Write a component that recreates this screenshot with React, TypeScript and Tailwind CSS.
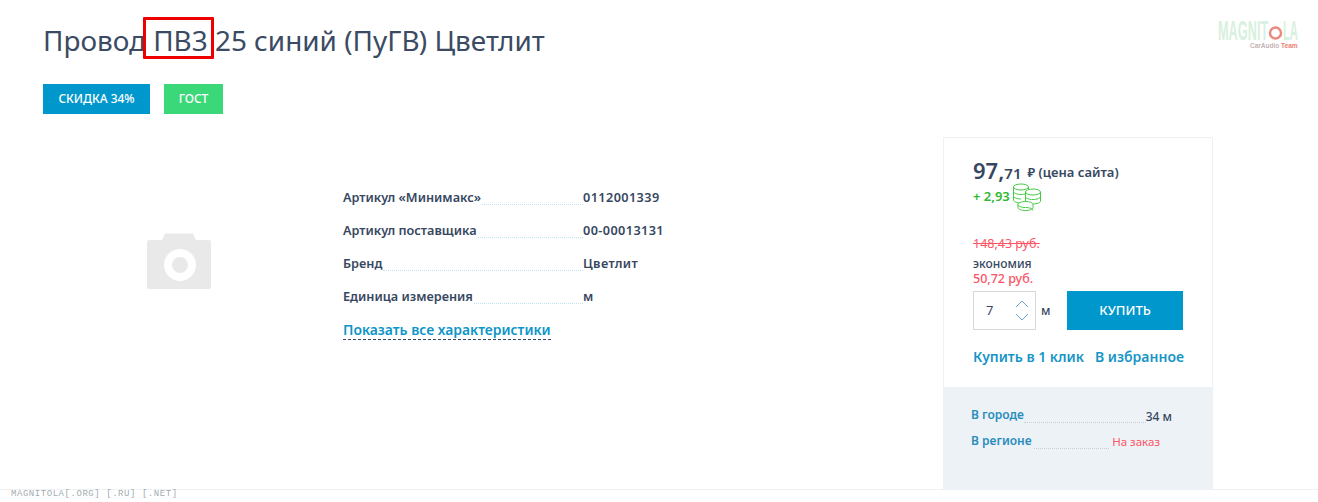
import React from 'react';

const specs = [
  { label: 'Артикул «Минимакс»', value: '0112001339' },
  { label: 'Артикул поставщика', value: '00-00013131' },
  { label: 'Бренд', value: 'Цветлит' },
  { label: 'Единица измерения', value: 'м' },
];

const CameraIcon = () => (
  <svg width="64" height="56" viewBox="0 0 64 56">
    <path
      fill="#e9e9e9"
      d="M2 7h13l3-6.500h28l3 6.500h13a2 2 0 0 1 2 2v45a2 2 0 0 1-2 2H2a2 2 0 0 1-2-2V9a2 2 0 0 1 2-2z"
    />
    <circle cx="33" cy="32" r="16" fill="#fff" />
    <circle cx="33" cy="32" r="8" fill="#e9e9e9" />
  </svg>
);

const CoinsIcon = () => (
  <svg width="29" height="28" viewBox="0 0 29 28" fill="#fff" stroke="#44cc44" strokeWidth="1">
    <ellipse cx="8" cy="4" rx="7.500" ry="3" />
    <path d="M0.500 4v13c0 1.700 3.400 3 7.500 3M0.500 8.500c0 1.700 3.400 3 7.500 3s7.500-1.300 7.500-3M0.500 13c0 1.700 3.400 3 7.500 3" fill="none" />
    <path d="M15.500 4v5" fill="none" />
    <ellipse cx="20" cy="9" rx="7.500" ry="3" />
    <path d="M12.500 9v9c0 1.700 3.400 3 7.500 3s7.500-1.300 7.500-3V9M12.500 13.500c0 1.700 3.400 3 7.500 3s7.500-1.300 7.500-3" fill="none" />
    <path d="M5 21.500c0-1.700 3.400-3 7.500-3s7.500 1.300 7.500 3v3c0 1.700-3.400 3-7.500 3s-7.500-1.300-7.500-3z" />
    <path d="M5 21.500c0 1.700 3.400 3 7.500 3s7.500 1.300 7.500 3" fill="none" />
  </svg>
);

export default function App() {
  return (
    <div className="relative h-[502px] w-[1318px] overflow-hidden bg-white font-['Noto_Sans',sans-serif] text-[#37475f]">
      {/* Title and badges */}
      <div className="pl-[43px] pt-[19px]">
        <h1 className="text-[27.900px] leading-[42px] text-[#3a4b63]">Провод ПВ3 25 синий (ПуГВ) Цветлит</h1>
        <div className="mt-[23px] flex gap-[14px]">
          <span className="flex h-[30px] w-[107px] items-center justify-center bg-[#0097cc] text-[12px] font-medium text-white">СКИДКА 34%</span>
          <span className="flex h-[30px] w-[59px] items-center justify-center bg-[#3bd87a] text-[12px] font-medium text-white">ГОСТ</span>
        </div>
      </div>

      {/* Main part */}
      <div className="mt-[23px] flex h-[352px] pl-[43px]">
        <div className="flex w-[272px] shrink-0 justify-center pt-[96px]">
          <CameraIcon />
        </div>
        <div className="ml-[28px] w-[600px] pt-[51px]">
          {specs.map((s) => (
            <div key={s.label} className="mb-[14px] flex h-[19px] items-center text-[12.700px] font-semibold leading-[19px]">
              <div className="flex w-[240px] items-end">
                <span className="whitespace-nowrap">{s.label}</span>
                <span className="mb-[2px] ml-[1px] flex-1 border-b border-dotted border-[#bfe3ee]" />
              </div>
              <span className="tracking-[0.400px]">{s.value}</span>
            </div>
          ))}
          <a className="block w-fit border-b border-dashed border-[#37475f] text-[13.900px] font-semibold leading-[19px] text-[#0c95c8]">
            Показать все характеристики
          </a>
        </div>

        {/* Price panel */}
        <div className="flex w-[270px] shrink-0 flex-col border border-[#eef2f6]">
          <div className="h-[249px] px-[29px] pt-[18px]">
            <div className="flex h-[27px] items-baseline leading-[28px]">
              <span className="text-[22px] font-semibold text-[#37475f]">97,</span>
              <span className="text-[15px] font-semibold">71</span>
              <span className="ml-[6px] -translate-y-[2px] text-[13px] font-semibold">₽ (цена сайта)</span>
            </div>
            <div className="flex h-[28px] items-center">
              <span className="text-[13px] font-semibold text-[#2fb82f]">+ 2,93</span>
              <span className="ml-[3px]"><CoinsIcon /></span>
            </div>
            <div className="mt-[24px] text-[12.500px] leading-[18px] text-[#fb5566] line-through">148,43 руб.</div>
            <div className="mt-[3px] text-[12px] font-medium leading-[15px]">экономия</div>
            <div className="text-[12.500px] font-medium leading-[15px] text-[#fb5566]">50,72 руб.</div>
            <div className="mt-[5px] flex items-center">
              <div className="flex h-[39px] w-[63px] items-center justify-between border border-[#d5d9dd] pl-[12px] pr-[6px] text-[13px]">
                <span>7</span>
                <div className="flex flex-col gap-[5px]">
                  <svg width="14" height="8" viewBox="0 0 14 8" fill="none" stroke="#6aa5d6" strokeWidth="1"><path d="M1 7l6-6 6 6" /></svg>
                  <svg width="14" height="8" viewBox="0 0 14 8" fill="none" stroke="#6aa5d6" strokeWidth="1"><path d="M1 1l6 6 6-6" /></svg>
                </div>
              </div>
              <span className="ml-[5px] w-[26px] text-[12px] font-medium">м</span>
              <button className="h-[39px] w-[116px] bg-[#0097cc] text-[13px] font-medium text-white">КУПИТЬ</button>
            </div>
            <div className="mt-[17px] flex gap-[11px] whitespace-nowrap text-[14px] font-semibold leading-[20px] text-[#1795c6]">
              <a>Купить в 1 клик</a>
              <a>В избранное</a>
            </div>
          </div>
          <div className="flex-1 bg-[#edf2f6] pl-[27px] pr-[40px] pt-[17px] text-[12px]">
            <div className="flex h-[20px] items-end leading-[18px]">
              <span className="font-semibold text-[#2a8dbd]">В городе</span>
              <span className="mb-[1px] flex-1 border-b border-dotted border-[#c3d0d8]" />
              <span className="translate-y-[2px] font-medium text-[#37475f]">34 м</span>
            </div>
            <div className="mt-[6px] flex h-[20px] items-end pr-[12px] leading-[18px]">
              <span className="font-semibold text-[#2a8dbd]">В регионе</span>
              <span className="mb-[1px] ml-[2px] mr-[3px] flex-1 border-b border-dotted border-[#c3d0d8]" />
              <span className="translate-y-[1px] text-[11.500px] text-[#fb5566]">На заказ</span>
            </div>
          </div>
        </div>
      </div>
      <div className="border-t border-[#eef2f6]" />

      {/* Overlays from the screenshot */}
      <div className="absolute left-[143px] top-[17px] h-[42px] w-[71px] rounded-[1px] border-[3px] border-[#ee0000]" />
      <div className="absolute left-[1218px] top-[19px] w-[80px] font-['Liberation_Sans',sans-serif] leading-none">
        <div className="flex h-[24px] items-center">
          <span className="h-[24px] w-[50px] origin-left scale-x-[0.455] whitespace-nowrap text-[28px] font-bold leading-[24px] text-[#d8f0de]">MAGNIT</span>
          <svg width="15" height="24" viewBox="0 0 15 24" fill="none" stroke="#e98a80" strokeWidth="2.500">
            <circle cx="7.500" cy="14" r="5.500" />
          </svg>
          <span className="h-[24px] w-[15px] origin-left scale-x-[0.4] whitespace-nowrap text-[28px] font-bold leading-[24px] text-[#d8f0de]">LA</span>
        </div>
        <div className="pl-[32px] text-[6.500px] font-bold whitespace-nowrap text-[#c4b4b4]">CarAudio <span className="text-[#ea7f73]">Team</span></div>
      </div>
      <div className="absolute left-[11px] top-[488px] font-['Liberation_Mono',monospace] text-[9px] tracking-[0.550px] text-[#a3acb0]">
        MAGNITOLA[.ORG] [.RU] [.NET]
      </div>
    </div>
  );
}
